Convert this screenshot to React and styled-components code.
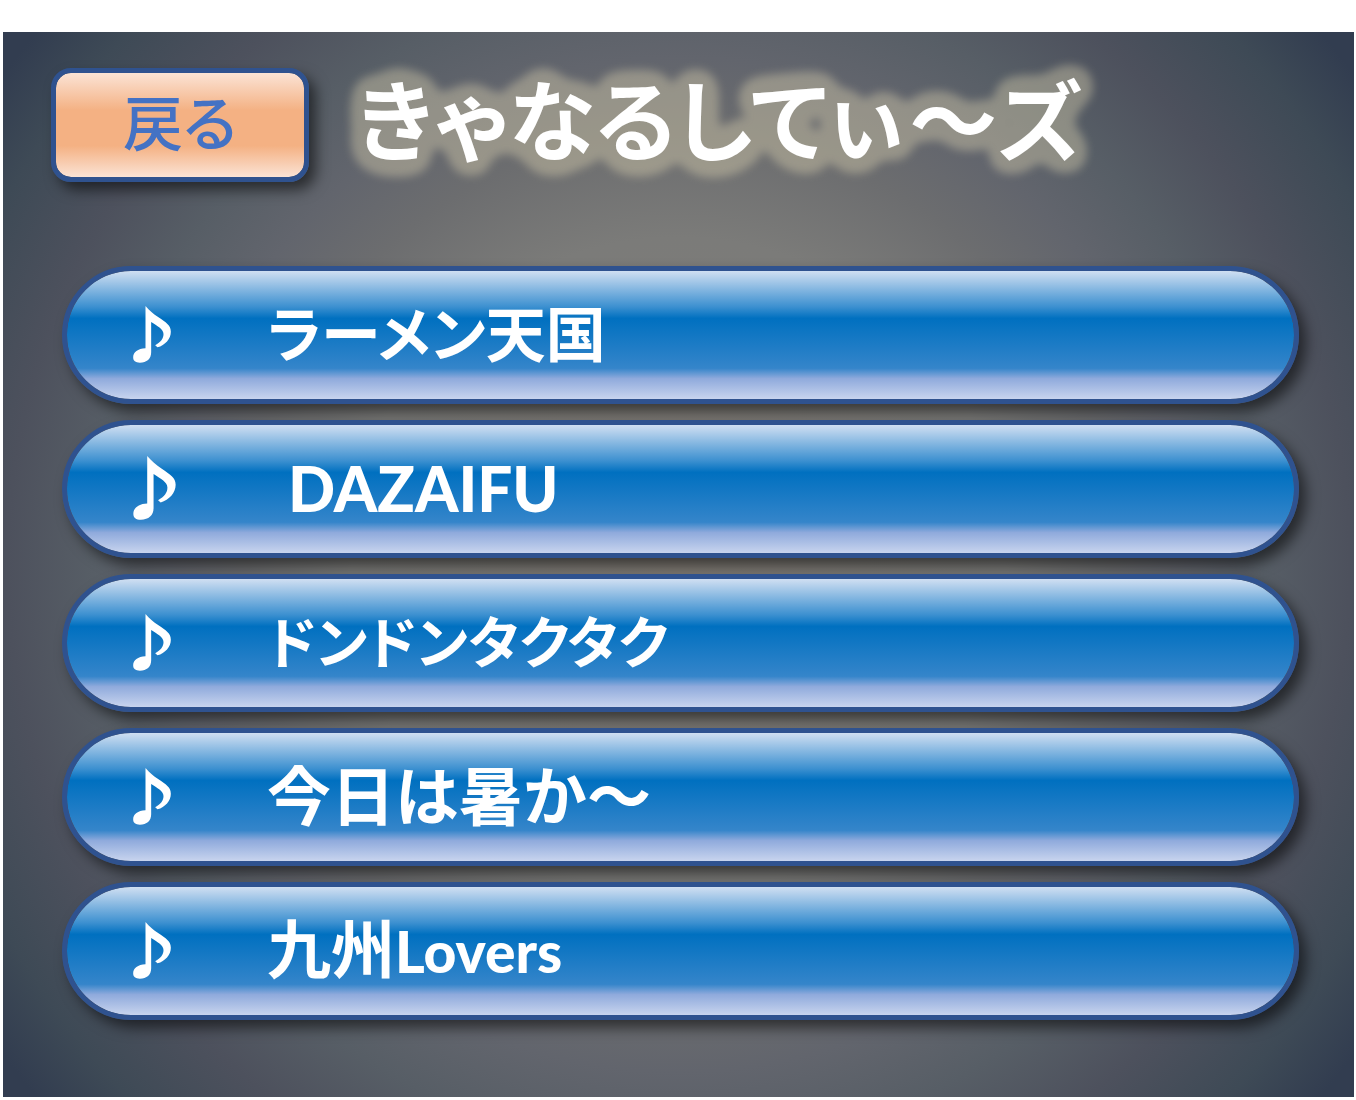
import React from 'react';
import styled, { createGlobalStyle } from 'styled-components';

const GlobalStyle = createGlobalStyle`
  *, *::before, *::after { box-sizing: border-box; }
  body {
    margin: 0;
    background: #ffffff;
    font-family: "Noto Sans CJK JP", "Noto Sans", sans-serif;
  }
`;

const Page = styled.div`
  padding: 32px 2px 3px 3px;
`;

const Slide = styled.main`
  padding: 36px 55px 77px 48px;
  background: radial-gradient(
    circle farthest-corner at center,
    #827d76 0%,
    #7b7b79 38%,
    #6c6d6f 50%,
    #62656d 59%,
    #575e66 68%,
    #4d515d 78%,
    #3e4a56 89%,
    #323d50 97%,
    #323d50 100%
  );
`;

const Header = styled.header`
  display: flex;
  align-items: flex-start;
  gap: 48px;
`;

const Raised = styled.button`
  border: 5px solid #2f528f;
  padding: 0;
  font-family: inherit;
  cursor: pointer;
  box-shadow: 7px 8px 14px rgba(0, 0, 0, 0.55);
`;

const BackButton = styled(Raised)`
  flex: none;
  width: 258px;
  height: 114px;
  padding-bottom: 10px;
  border-radius: 20px;
  color: #4472c4;
  font-size: 60px;
  font-weight: 500;
  line-height: 72px;
  font-feature-settings: "palt";
  background: linear-gradient(#fbe3d5 0%, #f4b183 36%, #f4b183 70%, #fbe3d5 100%) padding-box;
`;

const Title = styled.h1`
  margin: 0;
  color: #ffffff;
  font-size: 88px;
  font-weight: 700;
  line-height: 96px;
  white-space: nowrap;
  font-feature-settings: "palt";
  filter: url(#title-glow);
`;

const FilterDefs = styled.svg`
  position: absolute;
`;

const SongList = styled.ul`
  display: flex;
  flex-direction: column;
  gap: 16px;
  margin: 84px 0 0;
  padding: 0 0 0 11px;
  list-style: none;
`;

const SongButton = styled(Raised)`
  display: flex;
  align-items: center;
  width: 100%;
  height: 138px;
  padding: 0 66px 2px;
  border-radius: 69px;
  color: #ffffff;
  font-size: 64px;
  font-weight: 700;
  line-height: 96px;
  text-align: left;
  white-space: nowrap;
  background: linear-gradient(
      #d0dff2 0%,
      #3c90d0 28%,
      #0070c0 37%,
      #3585ca 76%,
      #8faadc 84%,
      #c8d4ee 100%
    )
    padding-box;
`;

const NoteShape = styled.svg`
  flex: none;
  width: ${({ $large }) => ($large ? 43 : 38)}px;
  height: ${({ $large }) => ($large ? 64 : 57)}px;
  margin-right: ${({ $large }) => ($large ? 112 : 96)}px;
  fill: currentColor;
`;

const SongName = styled.span`
  font-family: Lato, "Noto Sans CJK JP", sans-serif;
  font-size: ${({ $size }) => $size || 64}px;
  font-feature-settings: ${({ $tight }) => ($tight ? '"palt"' : 'normal')};
`;

const Latin = styled.span`
  font-size: ${({ $large }) => ($large ? 62 : 57)}px;
  font-weight: 900;
`;

const songs = [
  { name: 'ラーメン天国', tight: true, size: 60 },
  { latin: 'DAZAIFU', large: true },
  { name: 'ドンドンタクタク', tight: true, size: 56 },
  { name: '今日は暑か～' },
  { name: '九州', latin: 'Lovers' },
];

function GlowFilter() {
  return (
    <FilterDefs width="0" height="0" aria-hidden="true">
      <filter id="title-glow" x="-10%" y="-40%" width="120%" height="180%" colorInterpolationFilters="sRGB">
        <feGaussianBlur in="SourceAlpha" stdDeviation="10" />
        <feComponentTransfer result="spread">
          <feFuncA type="linear" slope="40" intercept="-0.8" />
        </feComponentTransfer>
        <feGaussianBlur in="spread" stdDeviation="4" result="soft" />
        <feFlood floodColor="#e6dab6" floodOpacity="0.38" />
        <feComposite in2="soft" operator="in" result="glow" />
        <feMerge>
          <feMergeNode in="glow" />
          <feMergeNode in="SourceGraphic" />
        </feMerge>
      </filter>
    </FilterDefs>
  );
}

function Note({ large }) {
  return (
    <NoteShape viewBox="0 0 113 171" $large={large} role="img" aria-label="♪">
      <path d="M37 0C49 14 60 23 76 34C98 49 113 58 113 77C113 99 96 117 73 124L66 118C83 108 91 98 91 84C91 70 74 61 54 48V139C54 159 41 170 20 170C7 170 0 165 0 154C0 139 14 128 37 127Z" />
    </NoteShape>
  );
}

export default function App() {
  return (
    <>
      <GlobalStyle />
      <GlowFilter />
      <Page>
        <Slide>
          <Header>
            <BackButton type="button">戻る</BackButton>
            <Title>きゃなるしてぃ～ズ</Title>
          </Header>
          <SongList>
            {songs.map(({ name, latin, large, tight, size }) => (
              <li key={name || latin}>
                <SongButton type="button">
                  <Note large={large} />
                  <SongName $tight={tight} $size={size}>
                    {name}
                    {latin && <Latin $large={large}>{latin}</Latin>}
                  </SongName>
                </SongButton>
              </li>
            ))}
          </SongList>
        </Slide>
      </Page>
    </>
  );
}
